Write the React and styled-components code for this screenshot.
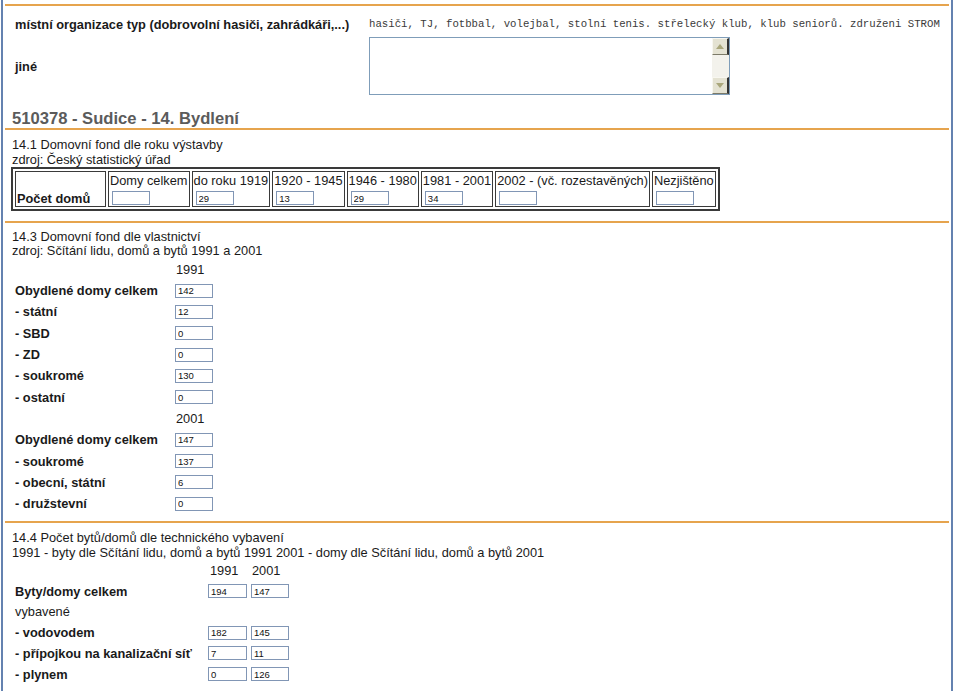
import { Fragment } from "react";
import styled, { createGlobalStyle } from "styled-components";

const GlobalStyle = createGlobalStyle`
  html, body {
    margin: 0;
    background: #fff;
    overflow: hidden;
  }
  body {
    font-family: "Liberation Sans", Arial, sans-serif;
    font-size: 12.8px;
    color: #1a1a1a;
  }
`;

const byYear = [
	{ label: "Domy celkem", value: "" },
	{ label: "do roku 1919", value: "29" },
	{ label: "1920 - 1945", value: "13" },
	{ label: "1946 - 1980", value: "29" },
	{ label: "1981 - 2001", value: "34" },
	{ label: "2002 - (vč. rozestavěných)", value: "" },
	{ label: "Nezjištěno", value: "" }
];

const ownership = [
	{ year: "1991" },
	{ label: "Obydlené domy celkem", value: "142" },
	{ label: "- státní", value: "12" },
	{ label: "- SBD", value: "0" },
	{ label: "- ZD", value: "0" },
	{ label: "- soukromé", value: "130" },
	{ label: "- ostatní", value: "0" },
	{ year: "2001" },
	{ label: "Obydlené domy celkem", value: "147" },
	{ label: "- soukromé", value: "137" },
	{ label: "- obecní, státní", value: "6" },
	{ label: "- družstevní", value: "0" }
];

const equipment = [
	{ label: "Byty/domy celkem", values: ["194", "147"] },
	{ label: "vybavené", plain: true },
	{ label: "- vodovodem", values: ["182", "145"] },
	{ label: "- přípojkou na kanalizační síť", values: ["7", "11"] },
	{ label: "- plynem", values: ["0", "126"] }
];

const Arrow = ({ down }) => (
	<svg width="8" height="5" viewBox="0 0 8 5">
		<path d={down ? "M0 0 L8 0 L4 5 Z" : "M0 5 L8 5 L4 0 Z"} fill="#aaa77c" />
	</svg>
);

const App = () => {
	return (
		<>
			<GlobalStyle />
			<Page>
				<Block>
					<OrgGrid>
						<OrgLabel>místní organizace typ (dobrovolní hasiči, zahrádkáři,...)</OrgLabel>
						<OrgValue>
							hasiči, TJ, fotbbal, volejbal, stolní tenis. střelecký klub, klub seniorů. združeni STROM
						</OrgValue>
						<OrgLabel>jiné</OrgLabel>
						<Memo>
							<MemoText defaultValue="" />
							<ScrollBar>
								<ScrollButton>
									<Arrow />
								</ScrollButton>
								<ScrollButton>
									<Arrow down />
								</ScrollButton>
							</ScrollBar>
						</Memo>
					</OrgGrid>
					<Heading>510378 - Sudice - 14. Bydlení</Heading>
				</Block>

				<Section pt="8.5px" pb="10px">
					<Caption>14.1 Domovní fond dle roku výstavby</Caption>
					<Caption>zdroj: Český statistický úřad</Caption>
					<YearTable>
						<FirstCell>
							<b>Počet domů</b>
						</FirstCell>
						{byYear.map((c) => (
							<YearCell key={c.label}>
								<CellLabel>{c.label}</CellLabel>
								<NumInput defaultValue={c.value} />
							</YearCell>
						))}
					</YearTable>
				</Section>

				<Section pt="6.5px" pb="7px">
					<Caption>14.3 Domovní fond dle vlastnictví</Caption>
					<Caption>zdroj: Sčítání lidu, domů a bytů 1991 a 2001</Caption>
					<FormGrid cols="160px 40px" row="21.3px">
						{ownership.map((r, i) => (
							<Fragment key={i}>
								{r.year ? (
									<>
										<span />
										<YearHead>{r.year}</YearHead>
									</>
								) : (
									<>
										<RowLabel>{r.label}</RowLabel>
										<Field>
											<NumInput defaultValue={r.value} />
										</Field>
									</>
								)}
							</Fragment>
						))}
					</FormGrid>
				</Section>

				<Section pt="8px" pb="0">
					<Caption>14.4 Počet bytů/domů dle technického vybavení</Caption>
					<Caption>
						1991 - byty dle Sčítání lidu, domů a bytů 1991 2001 - domy dle Sčítání lidu, domů a bytů 2001
					</Caption>
					<FormGrid cols="193px 43px 40px" row="20.7px">
						<span />
						<YearHead shift="2px">1991</YearHead>
						<YearHead>2001</YearHead>
						{equipment.map((r) => (
							<Fragment key={r.label}>
								<RowLabel plain={r.plain}>{r.label}</RowLabel>
								{r.values ? (
									r.values.map((v, j) => (
										<Field key={j}>
											<NumInput defaultValue={v} wide={j === 0} />
										</Field>
									))
								) : (
									<>
										<span />
										<span />
									</>
								)}
							</Fragment>
						))}
					</FormGrid>
				</Section>
			</Page>
		</>
	);
};

export default App;

/* Styled Components */

const Page = styled.div`
	margin-left: 1px;
	width: 952px;
	height: 691px;
	box-sizing: border-box;
	border-left: 2px solid #6482b0;
	border-right: 2px solid #6482b0;
	padding: 4px 2px 0;
`;

const Block = styled.div`
	border-top: 2px solid #e6a44e;
`;

const OrgGrid = styled.div`
	display: grid;
	grid-template-columns: 364px 1fr;
	row-gap: 5px;
	padding-top: 11px;
	align-items: center;
`;

const OrgLabel = styled.div`
	padding-left: 10px;
	font-weight: bold;
	line-height: 15px;
	white-space: nowrap;
`;

const OrgValue = styled.div`
	font-family: "Liberation Mono", "Courier New", monospace;
	font-size: 10.7px;
	line-height: 15px;
	color: #3a3a3a;
	white-space: nowrap;
`;

const Memo = styled.div`
	display: flex;
	width: 361px;
	height: 58px;
	box-sizing: border-box;
	border: 1px solid #7f9db9;
	background: #fff;
`;

const MemoText = styled.textarea`
	flex: 1;
	border: none;
	outline: none;
	resize: none;
	padding: 2px;
	font-family: "Liberation Mono", monospace;
	font-size: 11px;
`;

const ScrollBar = styled.div`
	display: flex;
	flex-direction: column;
	justify-content: space-between;
	width: 17px;
	background: #f3f2ec;
`;

const ScrollButton = styled.div`
	display: flex;
	align-items: center;
	justify-content: center;
	height: 17px;
	box-sizing: border-box;
	background: #e4e2d2;
	border-top: 1px solid #f8f7f0;
	border-left: 1px solid #f8f7f0;
	border-right: 2px solid #333;
	border-bottom: 1px solid #7c7a68;
`;

const Heading = styled.h1`
	margin: 13.7px 0 0;
	padding-left: 7px;
	font-size: 16.6px;
	line-height: 19px;
	font-weight: bold;
	color: #5b5b5b;
`;

const Section = styled.div`
	border-top: 2px solid #e6a44e;
	padding: ${(p) => p.pt} 0 ${(p) => p.pb} 7px;
`;

const Caption = styled.div`
	line-height: 14.5px;
	white-space: nowrap;
`;

const YearTable = styled.div`
	display: inline-flex;
	gap: 2px;
	margin-left: -1px;
	padding: 2px;
	border: 2px solid #3a3a3a;
`;

const YearCell = styled.div`
	display: flex;
	flex-direction: column;
	align-items: flex-start;
	padding: 1px;
	border: 1px solid #3a3a3a;
`;

const FirstCell = styled(YearCell)`
	width: 87px;
	justify-content: flex-end;
	line-height: 14px;
	padding-bottom: 0;
`;

const CellLabel = styled.div`
	line-height: 15px;
	white-space: nowrap;
`;

const NumInput = styled.input`
	width: ${(p) => (p.wide ? "39px" : "38px")};
	height: 14px;
	box-sizing: border-box;
	margin: 3px 0 0 2px;
	padding: 0 2px;
	border: 1px solid #8196b5;
	font-family: "Liberation Sans", Arial, sans-serif;
	font-size: 9.5px;
	color: #111;
	outline: none;
`;

const FormGrid = styled.div`
	display: grid;
	grid-template-columns: ${(p) => p.cols};
	grid-auto-rows: ${(p) => p.row};
	align-items: center;
	margin-left: 3px;
`;

const RowLabel = styled.div`
	font-weight: ${(p) => (p.plain ? "normal" : "bold")};
	white-space: nowrap;
	line-height: 15px;
`;

const YearHead = styled.div`
	padding-left: ${(p) => p.shift || "1px"};
	line-height: 15px;
`;

const Field = styled.div`
	display: flex;
	align-items: center;

	& > input {
		margin: 0;
	}
`;
